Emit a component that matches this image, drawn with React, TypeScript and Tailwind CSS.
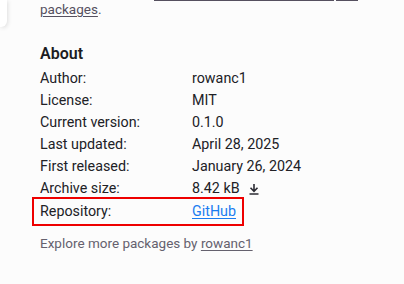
const rows: [string, string][] = [
  ["Author:", "rowanc1"],
  ["License:", "MIT"],
  ["Current version:", "0.1.0"],
  ["Last updated:", "April 28, 2025"],
  ["First released:", "January 26, 2024"],
];

const DownloadIcon = () => (
  <svg width="12" height="12" viewBox="0 0 12 12" fill="none" stroke="#2b2b33" strokeWidth="1.6">
    <path d="M6 1v7M2.5 4.8 6 8.3l3.5-3.5M1.5 11h9" />
  </svg>
);

const Row = ({ label, children }: { label: string; children: React.ReactNode }) => (
  <div className="flex h-[22px] items-center">
    <span className="w-[152px] shrink-0">{label}</span>
    <span className="flex items-center gap-2">{children}</span>
  </div>
);

export default function App() {
  return (
    <div
      className="relative h-[284px] w-[404px] overflow-hidden bg-[#fcfcfc] text-[14.3px] text-[#212126]"
      style={{ fontFamily: "Roboto, 'Liberation Sans', sans-serif" }}
    >
      <div className="absolute left-0 top-0 h-[27px] w-[7px] rounded-br-[6px] bg-white shadow-[1px_1px_4px_rgba(0,0,0,0.12)]" />
      <div className="flex h-[1px]">
        <span className="ml-[154px] w-[180px] bg-[#55505f]" />
        <span className="ml-[2px] w-[22px] bg-[#55505f]" />
      </div>
      <div className="pl-[40px]">
        <p className="text-[13.5px] leading-[17px] text-[#55505f]">
          <span className="underline underline-offset-2">packages</span>.
        </p>
        <h2 className="mt-[26px] text-[16px] font-semibold leading-[20px] text-[#1c1c22]">About</h2>
        <div className="mt-[4px]">
          {rows.map(([l, v]) => (
            <Row key={l} label={l}>
              {v}
            </Row>
          ))}
          <Row label="Archive size:">
            8.42 kB <DownloadIcon />
          </Row>
        </div>
        <div className="-ml-[8px] -mt-[3px] flex h-[29px] w-[212px] items-center border-2 border-[#ee0000] pl-[6px]">
          <span className="w-[152px] shrink-0">Repository:</span>
          <a className="text-[#1a7cf0] underline underline-offset-2">GitHub</a>
        </div>
        <p className="mt-[8px] text-[13.5px] leading-[18px] text-[#65616e]">
          Explore more packages by <span className="underline underline-offset-2">rowanc1</span>
        </p>
      </div>
    </div>
  );
}
